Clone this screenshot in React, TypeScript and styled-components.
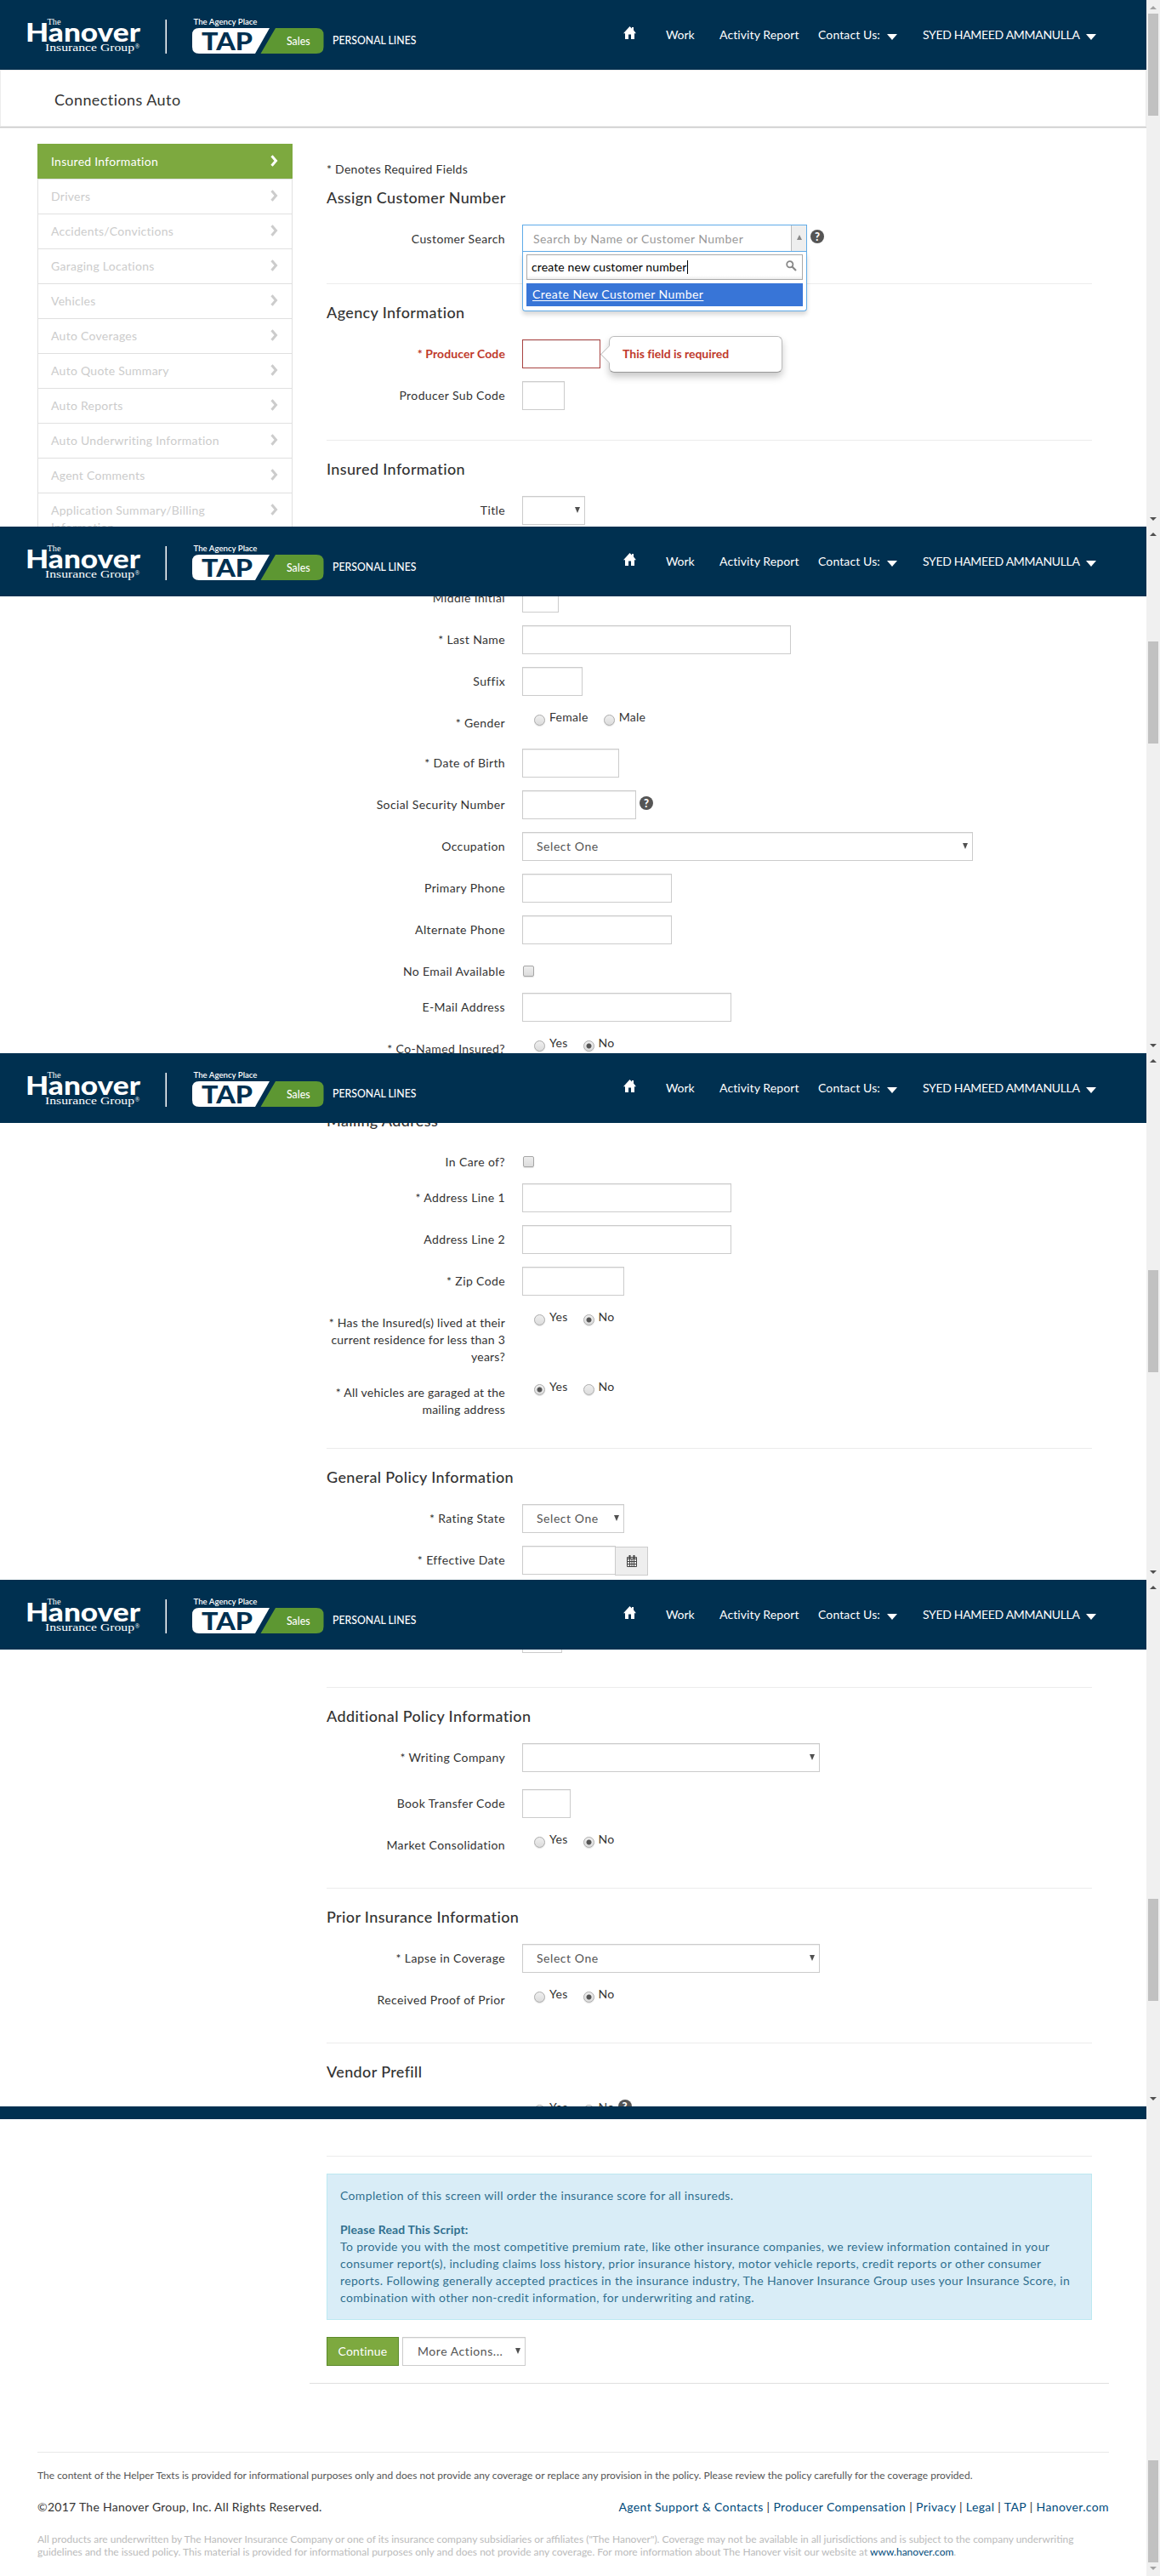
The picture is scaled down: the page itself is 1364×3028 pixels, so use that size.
import React from 'react';
import styled, { createGlobalStyle, css } from 'styled-components';

const NAVY = '#003050';
const GREEN = '#7da93f';
const LINK = '#004b7c';

const Global = createGlobalStyle`
  body {
    margin: 0;
    background: #fff;
    color: #333;
    font: 400 14px/20px Lato, "Liberation Sans", sans-serif;
    letter-spacing: 0.38px;
  }
  * { box-sizing: border-box; }
`;

/* ---------- frame ---------- */

const Pane = styled.section<{ $height: number }>`
  display: flex;
  width: 1364px;
  height: ${p => p.$height}px;
  overflow: hidden;
`;

const Page = styled.div`
  display: flex;
  flex-direction: column;
  width: 1348px;
  height: 100%;
`;

const Clip = styled.div<{ $shift?: number }>`
  flex: 1;
  min-height: 0;
  overflow: hidden;
  padding-left: 384px;

  > :first-child {
    margin-top: ${p => p.$shift ?? 0}px;
  }
`;

const Track = styled.div`
  display: flex;
  flex-direction: column;
  align-items: center;
  width: 16px;
  height: 100%;
  background: #f0f0f0;
`;

const Thumb = styled.div<{ $offset: number }>`
  width: 12px;
  height: 120px;
  margin-top: ${p => p.$offset}px;
  background: #c1c1c1;
`;

const ScrollArrow = styled.i<{ $down?: boolean; $dim?: boolean }>`
  width: 0;
  height: 0;
  border: 4px solid transparent;
  ${p =>
    p.$down
      ? css`
          margin: auto 0 7px;
          border-top-color: ${p.$dim ? '#a3a3a3' : '#505050'};
          border-bottom: 0;
        `
      : css`
          margin-top: 7px;
          border-bottom-color: ${p.$dim ? '#a3a3a3' : '#505050'};
          border-top: 0;
        `}
`;

function Scrollbar({ at, first, last }: { at: number; first?: boolean; last?: boolean }) {
  return (
    <Track>
      {!last && <ScrollArrow $dim={first} />}
      <Thumb $offset={last ? at : at - 11} />
      <ScrollArrow $down $dim={last} />
    </Track>
  );
}

/* ---------- header ---------- */

const Bar = styled.header<{ $height?: number }>`
  display: flex;
  flex: none;
  height: ${p => p.$height ?? 82}px;
  background: ${NAVY};
  color: #fff;
`;

const Brand = styled.svg`
  display: block;
  flex: none;
  width: 500px;
  height: 82px;
`;

const Nav = styled.nav`
  display: flex;
  align-items: flex-start;
  padding: 31px 0 0 233px;
`;

const NavItem = styled.a<{ $width: number; $spacing?: number }>`
  width: ${p => p.$width}px;
  letter-spacing: ${p => p.$spacing ?? 0}px;
  white-space: nowrap;
`;

const Caret = styled.i<{ $gap?: number }>`
  width: 0;
  height: 0;
  margin: 9px ${p => p.$gap ?? 0}px 0 0;
  border: 6px solid transparent;
  border-top: 7px solid #fff;
  border-bottom: 0;
`;

function Header() {
  return (
    <Bar>
      <Brand viewBox="0 0 500 82" fill="#fff">
        <g fontFamily="Liberation Serif, serif" letterSpacing="0">
          <text x="55.500" y="29" fontSize="10" textLength="16" lengthAdjust="spacingAndGlyphs">The</text>
          <text x="53" y="60" fontSize="13.500" textLength="105" lengthAdjust="spacingAndGlyphs">Insurance Group</text>
          <text x="158.500" y="57" fontSize="7.500">®</text>
        </g>
        <text x="30" y="49" fontSize="31" fontWeight="900" letterSpacing="0" textLength="135" lengthAdjust="spacingAndGlyphs" fontFamily="Lato, sans-serif">Hanover</text>
        <rect x="194.500" y="23" width="1.500" height="40" />
        <g fontFamily="Lato, sans-serif" letterSpacing="0">
          <text x="227.500" y="29" fontSize="10" fontWeight="600" textLength="75" lengthAdjust="spacingAndGlyphs">The Agency Place</text>
          <path d="M234 33H317L300 63H234Q226 63 226 55V41Q226 33 234 33Z" />
          <path d="M324 33H372Q380.500 33 380.500 41V55Q380.500 63 372 63H306.500Z" fill="#5d9732" />
          <text x="237" y="58.500" fontSize="28.500" fontWeight="900" fill={NAVY} textLength="60" lengthAdjust="spacingAndGlyphs">TAP</text>
          <text x="337" y="52.500" fontSize="13" fontWeight="500" textLength="27.500" lengthAdjust="spacingAndGlyphs">Sales</text>
          <text x="391" y="52.300" fontSize="12.500" fontWeight="500" textLength="98.500" lengthAdjust="spacingAndGlyphs">PERSONAL LINES</text>
        </g>
      </Brand>
      <Nav>
        <NavItem $width={50}>
          <svg width="15" height="15" viewBox="0 0 15 15" fill="#fff">
            <path d="M7.500 0L10 2.500V1H12V4.500L15 8.200H13V15H9V9.500H6V15H2V8.200H0Z" />
          </svg>
        </NavItem>
        <NavItem $width={63} $spacing={-0.1}>Work</NavItem>
        <NavItem $width={116} $spacing={0.1}>Activity Report</NavItem>
        <NavItem $width={81} $spacing={0.12}>Contact Us:</NavItem>
        <Caret $gap={30} />
        <NavItem $width={192} $spacing={-0.32}>SYED HAMEED AMMANULLA</NavItem>
        <Caret />
      </Nav>
    </Bar>
  );
}

const TitleBar = styled.div`
  flex: none;
  height: 67px;
  margin-bottom: 20px;
  padding: 23px 0 0 63px;
  border: 1px solid #ececec;
  box-shadow: 0 1px 0 #cbcbcb, 0 2px 0 #ebebeb;
  font-size: 18px;
  line-height: 22px;
  letter-spacing: 0.43px;
`;

/* ---------- side menu ---------- */

const Columns = styled.div`
  display: flex;
  flex: 1;
  min-height: 0;
`;

const Menu = styled.ul`
  width: 300px;
  margin: 0 40px 0 44px;
  padding: 0;
  list-style: none;
`;

const MenuItem = styled.li<{ $active?: boolean }>`
  display: flex;
  justify-content: space-between;
  min-height: 41px;
  padding: 10px 16px 10px 15px;
  border: 1px solid #e0e0e0;
  border-bottom: 0;
  color: #ccc;
  letter-spacing: 0.27px;
  ${p =>
    p.$active &&
    css`
      background: ${GREEN};
      border-color: ${GREEN};
      color: #fff;
    `}

  span { width: 210px; }
  svg { margin-top: 2px; }
`;

const menu = [
  'Insured Information', 'Drivers', 'Accidents/Convictions', 'Garaging Locations', 'Vehicles', 'Auto Coverages',
  'Auto Quote Summary', 'Auto Reports', 'Auto Underwriting Information', 'Agent Comments',
  'Application Summary/Billing Information',
];

/* ---------- form parts ---------- */

const Main = styled.main`
  width: 900px;
`;

const Note = styled.p`
  margin: 20px 0 0;
  letter-spacing: 0.27px;
`;

const Heading = styled.h2<{ $lead?: number }>`
  height: ${p => p.$lead ?? 65}px;
  margin: 0;
  padding-top: ${p => (p.$lead ?? 65) - 44}px;
  font-size: 18px;
  font-weight: 500;
  line-height: 24px;
  letter-spacing: 0.36px;
`;

/* 35px = the last row's 15px margin, which collapses into it, plus 20px */
const Rule = styled.hr<{ $before?: number }>`
  width: 900px;
  height: 1px;
  margin: ${p => p.$before ?? 35}px 0 0;
  border: 0;
  background: #ececec;
`;

const RowBox = styled.div<{ $min: number }>`
  display: flex;
  align-items: flex-start;
  gap: 20px;
  min-height: ${p => p.$min}px;
  margin-bottom: 15px;
`;

const Label = styled.label<{ $error?: boolean }>`
  flex: none;
  display: flex;
  justify-content: flex-end;
  width: 210px;
  padding-top: 7px;
  text-align: right;
  white-space: nowrap;
  ${p =>
    p.$error &&
    css`
      color: #c0392b;
      font-weight: 700;
      letter-spacing: 0.1px;
    `}
`;

const LongLabel = styled.span`
  letter-spacing: 0.23px;
`;

const Control = styled.div`
  position: relative;
  display: flex;
  align-items: flex-start;
`;

function Row({ label, min = 34, error, children }: { label: React.ReactNode; min?: number; error?: boolean; children?: React.ReactNode }) {
  return (
    <RowBox $min={min}>
      <Label $error={error}>{label}</Label>
      <Control>{children}</Control>
    </RowBox>
  );
}

const Input = styled.div<{ $width: number; $error?: boolean }>`
  width: ${p => p.$width}px;
  height: 34px;
  border: 1px solid ${p => (p.$error ? '#a94442' : '#ccc')};
  background: #fff;
  box-shadow: inset 0 1px 1px rgba(0, 0, 0, 0.075);
`;

const Select = styled(Input)<{ $indent?: number }>`
  display: flex;
  align-items: center;
  justify-content: space-between;
  padding: 0 5px 0 ${p => p.$indent ?? 16}px;
  color: #555;
  letter-spacing: 0.55px;
  white-space: nowrap;

  &::after {
    content: '';
    margin: 0 0 2px auto;
    border: 3px solid transparent;
    border-top: 7px solid #505050;
    border-bottom: 0;
  }
`;

const Checkbox = styled.span`
  width: 13px;
  height: 13px;
  margin: 10px 0 0 1px;
  border: 1px solid #a6a6a6;
  border-radius: 2px;
  background: linear-gradient(#eee, #dcdcdc);
  box-shadow: 0 1px 1px rgba(0, 0, 0, 0.12);
`;

const RadioGroup = styled.div`
  display: flex;
  gap: 18px;
  padding-left: 14px;
`;

const Option = styled.label`
  display: flex;
  gap: 5px;
  letter-spacing: 0.3px;
`;

const Dot = styled.span<{ $on?: boolean }>`
  width: 13px;
  height: 13px;
  margin-top: 7px;
  border: 1px solid #ababab;
  border-radius: 50%;
  background: ${p =>
    p.$on
      ? 'radial-gradient(circle, #555 0 2.6px, transparent 3.4px), linear-gradient(#efefef, #dcdcdc)'
      : 'linear-gradient(#efefef, #dcdcdc)'};
  box-shadow: 0 1px 1px rgba(0, 0, 0, 0.12);
`;

function Radios({ options = ['Yes', 'No'], value }: { options?: string[]; value?: string }) {
  return (
    <RadioGroup>
      {options.map(o => (
        <Option key={o}>
          <Dot $on={o === value} />
          {o}
        </Option>
      ))}
    </RadioGroup>
  );
}

const Help = styled.span<{ $top?: number }>`
  display: flex;
  align-items: center;
  justify-content: center;
  flex: none;
  width: 16px;
  height: 16px;
  margin: ${p => p.$top ?? 7}px 0 0 4px;
  border-radius: 50%;
  background: #555;
  color: #fff;
  font-size: 13px;
  font-weight: 900;
  line-height: 16px;
  letter-spacing: 0;
`;

/* ---------- customer search ---------- */

const Search = styled.div`
  position: relative;
  display: flex;
  justify-content: space-between;
  width: 335px;
  height: 32px;
  padding-left: 12px;
  border: 1px solid #5fabe8;
  color: #999;
  letter-spacing: 0.44px;
`;

const SearchText = styled.span`
  padding-top: 6px;
`;

const SearchToggle = styled.span`
  display: flex;
  justify-content: center;
  width: 18px;
  padding-top: 11px;
  border-left: 1px solid #bbb;
  background: #eee;

  &::after {
    content: '';
    height: 0;
    border: 3px solid transparent;
    border-top: 0;
    border-bottom: 6px solid #888;
  }
`;

const Drop = styled.div`
  position: absolute;
  z-index: 2;
  top: 31px;
  left: -1px;
  width: 335px;
  height: 70px;
  padding: 3px 4px 0;
  border: 1px solid #5fabe8;
  border-top: 0;
  border-radius: 0 0 4px 4px;
  background: #fff;
  box-shadow: 0 4px 5px rgba(0, 0, 0, 0.15);
`;

const Query = styled.div`
  display: flex;
  height: 30px;
  padding: 4px 6px 0 5px;
  border: 1px solid #aaa;
  background: linear-gradient(#fff 85%, #eee);
  color: #000;
  letter-spacing: 0.12px;

  svg { margin: 2px 0 0 auto; }
`;

const Cursor = styled.i`
  width: 1px;
  height: 16px;
  margin-top: 2px;
  background: #000;
`;

const Result = styled.div`
  height: 27px;
  margin-top: 4px;
  padding: 3px 7px 0;
  background: #3875d7;
  color: #fff;
  text-decoration: underline;
  text-underline-offset: 2px;
`;

const Bubble = styled.div`
  position: absolute;
  top: -4px;
  left: 102px;
  width: 204px;
  height: 43px;
  padding: 10px 15px;
  border: 1px solid #bbb;
  border-bottom-color: #999;
  border-radius: 6px;
  background: #fff;
  box-shadow: 0 5px 8px rgba(0, 0, 0, 0.22);
  color: #c0392b;
  font-weight: 700;
  letter-spacing: -0.02px;

  &::before {
    content: '';
    position: absolute;
    top: 13px;
    left: -8px;
    width: 14px;
    height: 14px;
    border: solid #c4c4c4;
    border-width: 0 0 1px 1px;
    background: #fff;
    transform: rotate(45deg);
  }
`;

const Addon = styled.span`
  display: flex;
  align-items: center;
  justify-content: center;
  width: 39px;
  height: 34px;
  margin: 1px 0 0 -1px;
  border: 1px solid #ccc;
  background: #eee;
`;

/* ---------- closing part ---------- */

const Notice = styled.div`
  width: 900px;
  margin-top: 20px;
  padding: 15px;
  border: 1px solid #bce8f1;
  background: #d9edf7;
  color: #31708f;
  letter-spacing: 0.355px;
  white-space: nowrap;

  p { margin: 0 0 20px; }
  b { display: block; letter-spacing: 0.15px; }
`;

const Actions = styled.div`
  display: flex;
  gap: 4px;
  margin: 20px 0;
`;

const Button = styled.button`
  width: 85px;
  height: 34px;
  padding: 0;
  border: 1px solid #5c8a2b;
  background: ${GREEN};
  color: #fff;
  font: inherit;
  letter-spacing: 0.2px;
`;

const WideRule = styled.hr`
  width: 940px;
  height: 1px;
  margin: 0 0 0 -20px;
  border: 0;
  background: #dfdfdf;
`;

const Footer = styled.footer`
  width: 1260px;
  margin: 80px 0 0 -340px;
  border-top: 1px solid #e8e8e8;
`;

const HelperText = styled.p`
  margin: 17px 0;
  color: #555;
  font-size: 12px;
  letter-spacing: 0.02px;
  white-space: nowrap;
`;

const Legal = styled.div`
  display: flex;
  justify-content: space-between;
  letter-spacing: 0.27px;
`;

const Links = styled.div`
  letter-spacing: 0.38px;

  a { color: ${LINK}; }
`;

const FinePrint = styled.p`
  margin: 20px 0 0;
  color: #bbb;
  font-size: 12px;
  line-height: 15px;
  letter-spacing: 0;
  white-space: nowrap;

  a { color: ${LINK}; }
`;

const links = ['Agent Support & Contacts', 'Producer Compensation', 'Privacy', 'Legal', 'TAP', 'Hanover.com'];

export default function App() {
  return (
    <>
      <Global />

      <Pane $height={619}>
        <Page>
          <Header />
          <TitleBar>Connections Auto</TitleBar>
          <Columns>
            <Menu>
              {menu.map((m, i) => (
                <MenuItem key={m} $active={i === 0}>
                  <span>{m}</span>
                  <svg width="9" height="14" viewBox="0 0 9 14" fill="none" stroke="currentColor" strokeWidth="3">
                    <path d="M1.500 1.200L6.500 7L1.500 12.800" />
                  </svg>
                </MenuItem>
              ))}
            </Menu>
            <Main>
              <Note>* Denotes Required Fields</Note>
              <Heading $lead={55}>Assign Customer Number</Heading>
              <Row label="Customer Search">
                <Search>
                  <SearchText>Search by Name or Customer Number</SearchText>
                  <SearchToggle />
                  <Drop>
                    <Query>
                      create new customer number
                      <Cursor />
                      <svg width="13" height="13" viewBox="0 0 13 13" fill="none" stroke="#888" strokeWidth="1.800">
                        <circle cx="4.800" cy="4.800" r="3.600" />
                        <path d="M7.500 7.500L12 12" strokeWidth="2.200" />
                      </svg>
                    </Query>
                    <Result>Create New Customer Number</Result>
                  </Drop>
                </Search>
                <Help $top={6}>?</Help>
              </Row>
              <Rule />
              <Heading>Agency Information</Heading>
              <Row label="* Producer Code" error>
                <Input $width={92} $error />
                <Bubble>This field is required</Bubble>
              </Row>
              <Row label="Producer Sub Code"><Input $width={50} /></Row>
              <Rule />
              <Heading>Insured Information</Heading>
              <Row label="Title"><Select $width={74} /></Row>
            </Main>
          </Columns>
        </Page>
        <Scrollbar at={16} first />
      </Pane>

      <Pane $height={619}>
        <Page>
          <Header />
          <Clip $shift={-15}>
            <Row label="Middle Initial"><Input $width={43} /></Row>
            <Row label="* Last Name"><Input $width={316} /></Row>
            <Row label="Suffix"><Input $width={71} /></Row>
            <Row label="* Gender" min={32}><Radios options={['Female', 'Male']} /></Row>
            <Row label="* Date of Birth"><Input $width={114} /></Row>
            <Row label="Social Security Number">
              <Input $width={134} />
              <Help>?</Help>
            </Row>
            <Row label="Occupation"><Select $width={530}>Select One</Select></Row>
            <Row label="Primary Phone"><Input $width={176} /></Row>
            <Row label="Alternate Phone"><Input $width={176} /></Row>
            <Row label="No Email Available" min={27}><Checkbox /></Row>
            <Row label="E-Mail Address"><Input $width={246} /></Row>
            <Row label="* Co-Named Insured?" min={32}><Radios value="No" /></Row>
          </Clip>
        </Page>
        <Scrollbar at={135} />
      </Pane>

      <Pane $height={619}>
        <Page>
          <Header />
          <Clip $shift={-36}>
            <Heading>Mailing Address</Heading>
            <Row label="In Care of?" min={27}><Checkbox /></Row>
            <Row label="* Address Line 1"><Input $width={246} /></Row>
            <Row label="Address Line 2"><Input $width={246} /></Row>
            <Row label="* Zip Code"><Input $width={120} /></Row>
            <Row label={<LongLabel>* Has the Insured(s) lived at their<br />current residence for less than 3<br />years?</LongLabel>}>
              <Radios value="No" />
            </Row>
            <Row label={<LongLabel>* All vehicles are garaged at the<br />mailing address</LongLabel>}>
              <Radios value="Yes" />
            </Row>
            <Rule />
            <Heading>General Policy Information</Heading>
            <Row label="* Rating State"><Select $width={120}>Select One</Select></Row>
            <Row label="* Effective Date">
              <Input $width={110} />
              <Addon>
                <svg width="14" height="14" viewBox="0 0 14 14" fill="none" stroke="#444">
                  <path d="M1.500 2.500H12.500V13.500H1.500ZM1.500 4.500H12.500M1.500 7.500H12.500M1.500 10.500H12.500M4.500 4.500V13.500M7 4.500V13.500M9.500 4.500V13.500" />
                  <path d="M4.500 0V4M9.500 0V4" strokeWidth="2" />
                </svg>
              </Addon>
            </Row>
          </Clip>
        </Page>
        <Scrollbar at={255} />
      </Pane>

      <Pane $height={619}>
        <Page>
          <Header />
          <Clip $shift={-30}>
            <Row label=""><Input $width={47} /></Row>
            <Rule $before={40} />
            <Heading>Additional Policy Information</Heading>
            <Row label="* Writing Company" min={39}><Select $width={350} /></Row>
            <Row label="Book Transfer Code"><Input $width={57} /></Row>
            <Row label="Market Consolidation" min={32}><Radios value="No" /></Row>
            <Rule />
            <Heading>Prior Insurance Information</Heading>
            <Row label="* Lapse in Coverage"><Select $width={350}>Select One</Select></Row>
            <Row label="Received Proof of Prior" min={32}><Radios value="No" /></Row>
            <Rule />
            <Heading>Vendor Prefill</Heading>
            <Row label="">
              <Radios />
              <Help $top={1}>?</Help>
            </Row>
          </Clip>
        </Page>
        <Scrollbar at={375} />
      </Pane>

      <Pane $height={552}>
        <Page>
          <Bar $height={15} />
          <Clip $shift={43}>
            <Rule />
            <Notice>
              <p>Completion of this screen will order the insurance score for all insureds.</p>
              <b>Please Read This Script:</b>
              To provide you with the most competitive premium rate, like other insurance companies, we review information contained in your<br />
              consumer report(s), including claims loss history, prior insurance history, motor vehicle reports, credit reports or other consumer<br />
              reports. Following generally accepted practices in the insurance industry, The Hanover Insurance Group uses your Insurance Score, in<br />
              combination with other non-credit information, for underwriting and rating.
            </Notice>
            <Actions>
              <Button>Continue</Button>
              <Select $width={145} $indent={17}>More Actions...</Select>
            </Actions>
            <WideRule />
            <Footer>
              <HelperText>
                The content of the Helper Texts is provided for informational purposes only and does not provide any coverage or replace any provision in the policy. Please review the policy carefully for the coverage provided.
              </HelperText>
              <Legal>
                <span>©2017 The Hanover Group, Inc. All Rights Reserved.</span>
                <Links>
                  {links.map((l, i) => (
                    <React.Fragment key={l}>
                      {i > 0 && ' | '}
                      <a>{l}</a>
                    </React.Fragment>
                  ))}
                </Links>
              </Legal>
              <FinePrint>
                All products are underwritten by The Hanover Insurance Company or one of its insurance company subsidiaries or affiliates ("The Hanover"). Coverage may not be available in all jurisdictions and is subject to the company underwriting<br />
                guidelines and the issued policy. This material is provided for informational purposes only and does not provide any coverage. For more information about The Hanover visit our website at <a>www.hanover.com</a>.
              </FinePrint>
            </Footer>
          </Clip>
        </Page>
        <Scrollbar at={416} last />
      </Pane>
    </>
  );
}
